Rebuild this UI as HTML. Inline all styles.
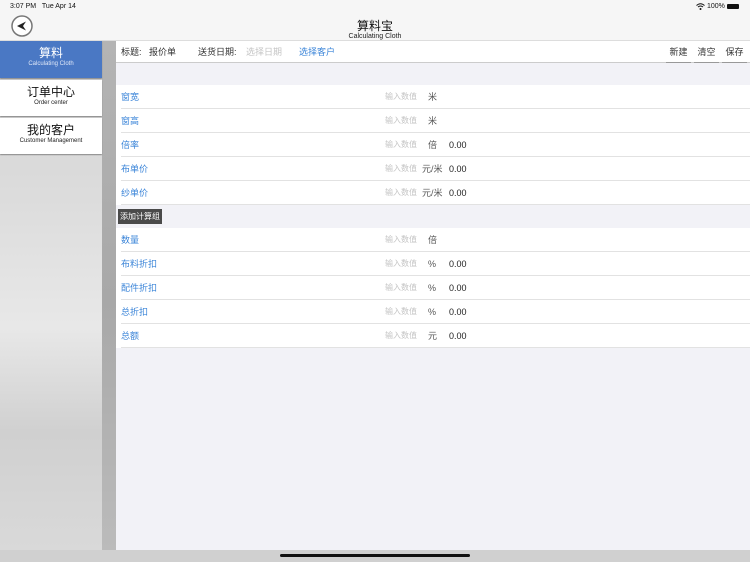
<!DOCTYPE html>
<html><head><meta charset="utf-8"><style>
*{margin:0;padding:0;box-sizing:border-box}
body{width:750px;height:562px;overflow:hidden;position:relative;background:#f7f7f7;font-family:"Liberation Sans","Noto Sans CJK SC",sans-serif;}
.abs{position:absolute}
.sb{left:0;top:41px;width:102px;height:521px;background:linear-gradient(180deg,#d2d2d2 0%,#dcdcdc 30%,#e8e8e8 55%,#d0d0d0 75%,#dadada 100%)}
.gap{left:102px;top:41px;width:14px;height:521px;background:linear-gradient(180deg,#b4b4b4,#a8a8a8 50%,#bcbcbc)}
.nav{position:absolute;left:0;width:102px;height:36px;background:#fff;text-align:center;box-shadow:0 1px 1px #888}
.nav b{display:block;font-weight:normal;font-size:12px;color:#111;margin-top:5px;line-height:14px}
.nav i{display:block;font-style:normal;font-size:6px;color:#222;line-height:9px}
.main{left:116px;top:41px;width:634px;height:509px;background:#f2f2f7}
.row{position:absolute;left:0;width:634px;height:24px;background:#fff;font-size:9px;line-height:24px}
.row span{position:absolute;top:0}
.row .l{left:5px;color:#3a84d8}
.row .p{left:269px;color:#c4c4c4;font-size:8px}
.row .u{left:312px;color:#555}
.row .v{left:333px;color:#222}
.row:after{content:"";position:absolute;left:5px;right:0;bottom:0;border-bottom:1px solid #e2e2e2}
.hd span{position:absolute;top:0;line-height:22px}
</style></head><body>
<div class="abs" style="left:0;top:0;width:750px;height:41px;background:#f6f6f6;border-bottom:1px solid #ddd"></div>
<div class="abs" style="left:10px;top:2px;font-size:7px;line-height:9px;color:#111">3:07 PM&nbsp;&nbsp;&nbsp;Tue Apr 14</div>
<div class="abs" style="left:707px;top:2px;font-size:7px;line-height:9px;color:#111">100%</div>
<div class="abs" style="left:727px;top:4px;width:12px;height:5px;background:#111;border-radius:1px"></div>
<svg class="abs" style="left:696px;top:3px" width="9" height="7" viewBox="0 0 9 7"><path d="M0.5 2.5Q4.5-1 8.5 2.5M2 4Q4.5 2 7 4" stroke="#111" fill="none"/><circle cx="4.5" cy="6" r="1" fill="#111"/></svg>
<svg class="abs" style="left:11px;top:15px" width="22" height="22" viewBox="0 0 22 22"><circle cx="11" cy="11" r="10" fill="#fff" stroke="#777" stroke-width="1.5"/><path d="M6 11L15 6.5L12 11L15 15.5Z" fill="#222"/></svg>
<div class="abs" style="left:0;top:19px;width:750px;text-align:center;font-size:12px;line-height:14px;color:#111">算料宝</div>
<div class="abs" style="left:0;top:33px;width:750px;text-align:center;font-size:7px;line-height:8px;color:#222">Calculating Cloth</div>
<div class="abs sb"></div>
<div class="abs gap"></div>
<div class="nav" style="top:41px;background:#4a78c4;height:37px"><b style="color:#fff">算料</b><i style="color:#e0e8f8">Calculating Cloth</i></div>
<div class="nav" style="top:80px"><b>订单中心</b><i>Order center</i></div>
<div class="nav" style="top:118px"><b>我的客户</b><i>Customer Management</i></div>
<div class="abs main">
<div class="abs hd" style="left:0;top:0;width:634px;height:22px;background:#fff;border-bottom:1px solid #ccc;font-size:9px">
<span style="left:5px;color:#333">标题:&nbsp;&nbsp;&nbsp;报价单</span>
<span style="left:82px;color:#333">送货日期:</span>
<span style="left:130px;color:#c4c4c4">选择日期</span>
<span style="left:183px;color:#3a84d8">选择客户</span>
<span style="left:550px;color:#333;border-bottom:1px solid #999;width:25px;height:22px;text-align:center">新建</span>
<span style="left:578px;color:#333;border-bottom:1px solid #999;width:25px;height:22px;text-align:center">清空</span>
<span style="left:606px;color:#333;border-bottom:1px solid #999;width:25px;height:22px;text-align:center">保存</span>
</div>
<div class="row" style="top:44px"><span class="l">窗宽</span><span class="p">输入数值</span><span class="u">米</span></div>
<div class="row" style="top:68px"><span class="l">窗高</span><span class="p">输入数值</span><span class="u">米</span></div>
<div class="row" style="top:92px"><span class="l">倍率</span><span class="p">输入数值</span><span class="u">倍</span><span class="v">0.00</span></div>
<div class="row" style="top:116px"><span class="l">布单价</span><span class="p">输入数值</span><span class="u" style="left:306px">元/米</span><span class="v">0.00</span></div>
<div class="row" style="top:140px"><span class="l">纱单价</span><span class="p">输入数值</span><span class="u" style="left:306px">元/米</span><span class="v">0.00</span></div>
<div class="abs" style="left:2px;top:168px;width:44px;height:15px;background:#4a4a4a;color:#fff;font-size:8px;line-height:15px;text-align:center">添加计算组</div>
<div class="row" style="top:187px"><span class="l">数量</span><span class="p">输入数值</span><span class="u">倍</span></div>
<div class="row" style="top:211px"><span class="l">布料折扣</span><span class="p">输入数值</span><span class="u">%</span><span class="v">0.00</span></div>
<div class="row" style="top:235px"><span class="l">配件折扣</span><span class="p">输入数值</span><span class="u">%</span><span class="v">0.00</span></div>
<div class="row" style="top:259px"><span class="l">总折扣</span><span class="p">输入数值</span><span class="u">%</span><span class="v">0.00</span></div>
<div class="row" style="top:283px"><span class="l">总额</span><span class="p">输入数值</span><span class="u">元</span><span class="v">0.00</span></div>
</div>
<div class="abs" style="left:0;top:550px;width:750px;height:12px;background:#d0d0d0"></div>
<div class="abs" style="left:280px;top:554px;width:190px;height:3px;border-radius:2px;background:#111"></div>
</body></html>
